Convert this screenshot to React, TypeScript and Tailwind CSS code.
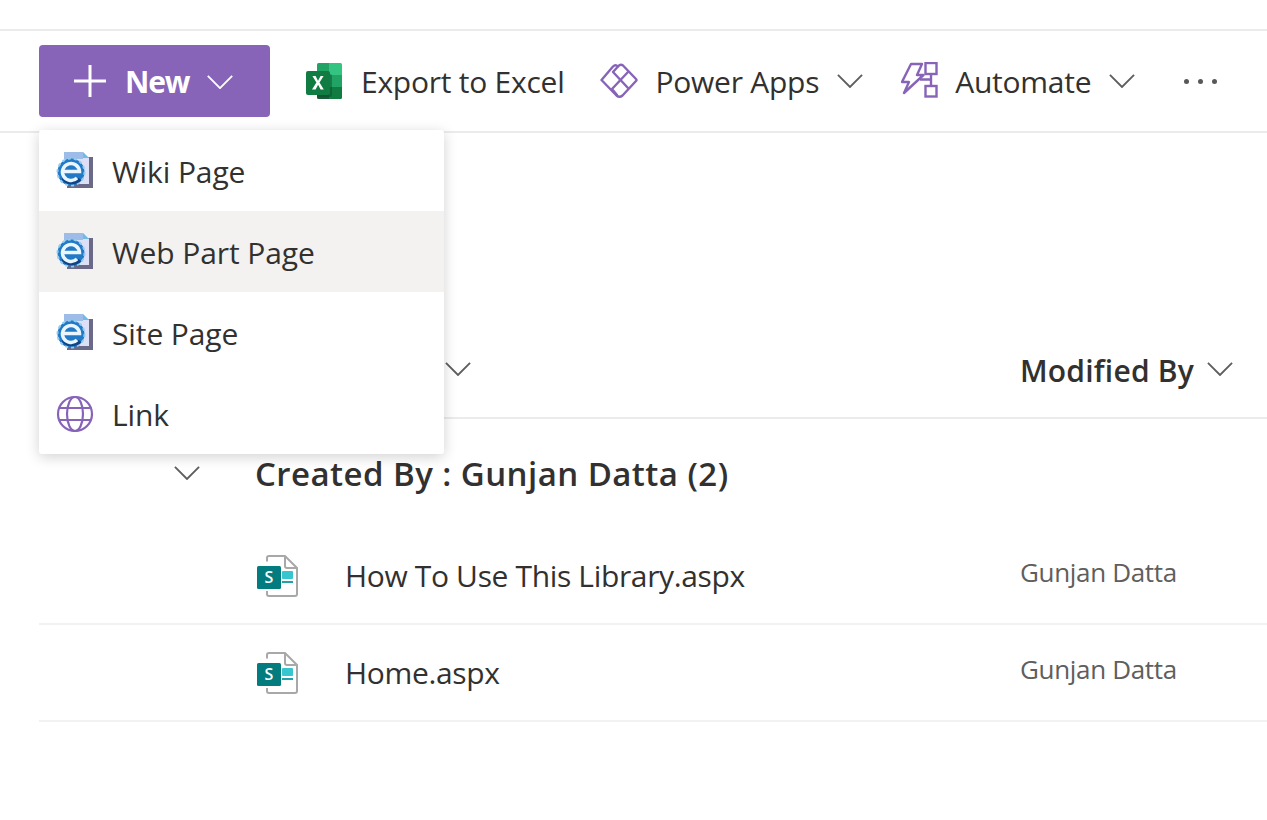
import { ReactNode } from 'react'

const FONT = "font-['Open_Sans','Noto_Sans',sans-serif]"

function Chevron({ className }: { className: string }) {
  return (
    <svg viewBox="0 0 28 16" fill="none" stroke="currentColor" strokeWidth="2" className={className}>
      <path d="M1 2l13 13L27 2" />
    </svg>
  )
}

function ExcelIcon() {
  return (
    <svg width="36" height="36" viewBox="0 0 36 36" className="shrink-0">
      <path d="M12.500 0H23v12H11V1.500A1.500 1.500 0 0 1 12.500 0z" fill="#21a366" />
      <path d="M23 0h11.500A1.500 1.500 0 0 1 36 1.500V12H23z" fill="#33c481" />
      <path d="M11 12h12v12H11z" fill="#107c41" />
      <path d="M23 12h13v12H23z" fill="#21a366" />
      <path d="M23 24h13v10.500a1.500 1.500 0 0 1-1.500 1.500H23z" fill="#107c41" />
      <path d="M11 24h12v12H12.500a1.500 1.500 0 0 1-1.500-1.500z" fill="#185c37" />
      <rect x="11" y="11" width="15" height="23" rx="2" fill="#0b4a2a" opacity="0.45" />
      <rect x="0" y="8" width="24" height="24" rx="2" fill="#107c41" />
      <path d="M6 26.500l4.400-7-4-6.500h3.200l2 4 .4.900.4-.9 2.200-4h3l-4.100 6.500 4.300 7h-3.200l-2.500-4.700-2.500 4.700z" fill="#fff" />
    </svg>
  )
}

function PowerAppsIcon() {
  return (
    <svg width="38" height="38" viewBox="0 0 38 38" fill="none" stroke="#8764b8" strokeWidth="2.400" className="shrink-0" strokeLinejoin="round" strokeLinecap="round">
      <path d="M1.500 18 13 4.500Q15.500 2 18 4.500 20.500 1.500 23 3.500L36 17Q37 18 36 19L22.500 33.500Q19.500 36 16.500 33.500z" />
      <path d="M18 4.500 13 10l15 16" />
      <path d="M28 10 12 27l5 6" />
    </svg>
  )
}

function AutomateIcon() {
  return (
    <svg width="38" height="38" viewBox="0 0 38 38" fill="none" stroke="#8764b8" strokeWidth="2.400" className="shrink-0">
      <path d="M10 2h11l-5 11h6.500L3 31l5-11H1z" strokeLinejoin="round" />
      <rect x="24.500" y="1" width="11" height="11" />
      <rect x="24.500" y="24" width="11" height="10.500" />
      <path d="M30 12v12M19 17.500h11" />
    </svg>
  )
}

function IePageIcon() {
  return (
    <svg width="38" height="38" viewBox="0 0 38 38" className="shrink-0 blur-[0.5px]">
      <rect x="11" y="5" width="26" height="31" fill="#6a6a88" />
      <path d="M8 0h19l6 6v26H8z" fill="#dcdff6" />
      <path d="M8 0h19v7H8z" fill="#9dbce8" />
      <path d="M27 0l6 6h-6z" fill="#6dbbe8" />
      <circle cx="15" cy="20" r="13.500" fill="#2279c6" />
      <circle cx="15" cy="20" r="13.500" fill="none" stroke="#8fcdf0" strokeWidth="2" strokeDasharray="3 3" />
      <path d="M7 26c3 6 13 6 17 1" fill="none" stroke="#0f4488" strokeWidth="3.500" />
      <path d="M7 19.500h16.500A8.500 8.500 0 1 0 21 26" fill="none" stroke="#eaf6ff" strokeWidth="3.500" />
    </svg>
  )
}

function GlobeIcon() {
  return (
    <svg width="38" height="38" viewBox="0 0 38 38" fill="none" stroke="#8764b8" strokeWidth="2.200" className="shrink-0">
      <circle cx="19" cy="19" r="17" />
      <ellipse cx="19" cy="19" rx="8" ry="17" />
      <path d="M3.500 13h31M3.500 25h31" />
    </svg>
  )
}

function SharePointFileIcon() {
  return (
    <svg width="42" height="42" viewBox="0 0 42 42" className="shrink-0">
      <path d="M10 6.500V3a2 2 0 0 1 2-2h16l12 12v26a2 2 0 0 1-2 2H12a2 2 0 0 1-2-2v-3" fill="#fff" stroke="#a8a8a8" strokeWidth="2" />
      <path d="M28 1v10a2 2 0 0 0 2 2h10" fill="none" stroke="#a8a8a8" strokeWidth="2" />
      <rect x="0" y="11" width="24" height="23" rx="1.500" fill="#037c7f" />
      <text x="12" y="28" textAnchor="middle" fontSize="16" fontWeight="600" fill="#fff" fontFamily="'Open Sans',sans-serif">S</text>
      <rect x="25" y="16" width="11" height="8" rx="1" fill="#37c6d0" />
      <rect x="25" y="26" width="11" height="2" fill="#1fa3aa" />
    </svg>
  )
}

function ToolbarItem({ icon, label, chevron, className, gapClass }: { icon: ReactNode; label: string; chevron?: boolean; className: string; gapClass: string }) {
  return (
    <div className={`flex items-center ${className}`}>
      {icon}
      <span className={`pt-[2px] text-[30px] leading-none tracking-[-0.25px] text-[#323130] ${gapClass}`}>{label}</span>
      {chevron && <Chevron className="mb-[2px] ml-[18px] h-[15px] w-[26px] text-[#605e5c]" />}
    </div>
  )
}

function MenuItem({ icon, label, active }: { icon: ReactNode; label: string; active?: boolean }) {
  return (
    <div className={`flex h-[81px] items-center pl-[17px] pt-[1px] ${active ? 'bg-[#f3f2f1]' : ''}`}>
      {icon}
      <span className="ml-[18px] pt-[2px] text-[30px] leading-none tracking-[-0.1px] text-[#323130]">{label}</span>
    </div>
  )
}

function FileRow({ name }: { name: string }) {
  return (
    <div className="ml-[39px] flex h-[97px] items-center border-b-2 border-[#f3f2f1] pl-[218px]">
      <SharePointFileIcon />
      <span className="ml-[46px] w-[675px] text-[30px] leading-none tracking-[-0.35px] text-[#323130]">{name}</span>
      <span className="mb-[8px] text-[26px] leading-none tracking-[-0.33px] text-[#605e5c]">Gunjan Datta</span>
    </div>
  )
}

export default function App() {
  return (
    <div className={`relative h-[820px] w-[1267px] overflow-hidden bg-white ${FONT}`}>
      <div className="pt-[29px]">
        {/* Command bar */}
        <div className="flex h-[104px] items-center border-y-2 border-[#edebe9] pl-[39px]">
          <button className="flex h-[72px] w-[231px] items-center rounded-[4px] bg-[#8764b8] pl-[35px] text-white">
            <svg width="32" height="32" viewBox="0 0 32 32" stroke="currentColor" strokeWidth="3" fill="none">
              <path d="M16 0v32M0 16h32" />
            </svg>
            <span className="ml-[19px] pt-[2px] text-[30px] font-bold leading-none tracking-[-1.2px]">New</span>
            <Chevron className="ml-[17px] h-[15px] w-[28px]" />
          </button>
          <ToolbarItem icon={<ExcelIcon />} label="Export to Excel" className="ml-[36px]" gapClass="ml-[19px]" />
          <ToolbarItem icon={<PowerAppsIcon />} label="Power Apps" chevron className="ml-[36px]" gapClass="ml-[17px]" />
          <ToolbarItem icon={<AutomateIcon />} label="Automate" chevron className="ml-[38px]" gapClass="ml-[16px]" />
          <div className="ml-[49px] flex gap-[9px] pt-[1px]">
            <span className="h-[5px] w-[5px] rounded-full bg-[#5a5856]" />
            <span className="h-[5px] w-[5px] rounded-full bg-[#5a5856]" />
            <span className="h-[5px] w-[5px] rounded-full bg-[#5a5856]" />
          </div>
        </div>

        {/* Column headers */}
        <div className="ml-[39px] flex h-[286px] items-end border-b-2 border-[#edebe9] pb-[31px]">
          <Chevron className="mb-[10px] ml-[406px] h-[15px] w-[26px] text-[#605e5c]" />
          <span className="ml-[549px] text-[30px] font-semibold leading-none tracking-[0.2px] text-[#323130]">Modified By</span>
          <Chevron className="mb-[10px] ml-[13px] h-[15px] w-[26px] text-[#605e5c]" />
        </div>

        {/* Group header */}
        <div className="flex h-[109px] items-start pl-[174px] pt-[34px]">
          <Chevron className="mt-[12px] h-[15px] w-[26px] text-[#605e5c]" />
          <span className="ml-[55px] text-[33px] font-semibold leading-[42px] tracking-[0.44px] text-[#323130]">Created By : Gunjan Datta (2)</span>
        </div>

        <FileRow name="How To Use This Library.aspx" />
        <FileRow name="Home.aspx" />
      </div>

      {/* New dropdown */}
      <div className="absolute left-[39px] top-[130px] w-[405px] rounded-[3px] bg-white shadow-[0_3px_14px_rgba(0,0,0,0.18)]">
        <MenuItem icon={<IePageIcon />} label="Wiki Page" />
        <MenuItem icon={<IePageIcon />} label="Web Part Page" active />
        <MenuItem icon={<IePageIcon />} label="Site Page" />
        <MenuItem icon={<GlobeIcon />} label="Link" />
      </div>
    </div>
  )
}
